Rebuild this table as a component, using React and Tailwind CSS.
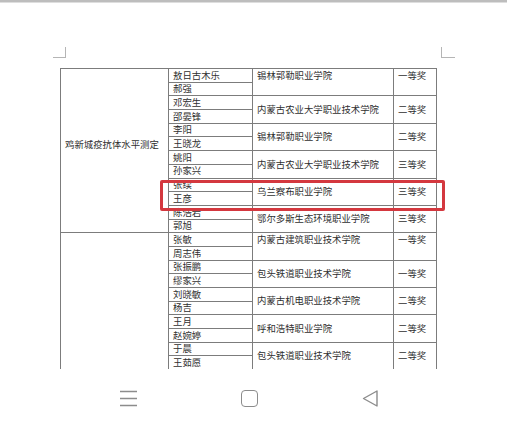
import React from "react";

const font = { fontFamily: '"Noto Sans CJK SC", "Noto Sans", sans-serif' };

// 名单数据：每组两名选手一行学校
const groups = [
  {
    title: "鸡新城疫抗体水平测定",
    span: "row-span-12",
    teams: [
      { names: ["敖日古木乐", "郝强"], school: "锡林郭勒职业学院", award: "一等奖", top: true },
      { names: ["邓宏生", "邵晏锋"], school: "内蒙古农业大学职业技术学院", award: "二等奖" },
      { names: ["李阳", "王晓龙"], school: "锡林郭勒职业学院", award: "二等奖" },
      { names: ["姚阳", "孙家兴"], school: "内蒙古农业大学职业技术学院", award: "三等奖" },
      { names: ["张续", "王彦"], school: "乌兰察布职业学院", award: "三等奖" },
      { names: ["陈浩岩", "郭旭"], school: "鄂尔多斯生态环境职业学院", award: "三等奖" },
    ],
  },
  {
    title: "",
    span: "row-span-10",
    teams: [
      { names: ["张敏", "周志伟"], school: "内蒙古建筑职业技术学院", award: "一等奖", top: true },
      { names: ["张振鹏", "缪家兴"], school: "包头铁道职业技术学院", award: "一等奖" },
      { names: ["刘晓敏", "杨吉"], school: "内蒙古机电职业技术学院", award: "二等奖" },
      { names: ["王月", "赵婉婷"], school: "呼和浩特职业学院", award: "二等奖" },
      { names: ["于晨", "王茹愿"], school: "包头铁道职业技术学院", award: "二等奖" },
    ],
  },
];

function SpanCell({ text, top, col }) {
  return (
    <div className={`${col} row-span-2 bg-white flex flex-col ${top ? "" : "justify-center"} pl-[4px]`}>
      <div className="h-[12.7px] flex items-center">{text}</div>
    </div>
  );
}

export default function App() {
  return (
    <div className="relative w-[507px] h-[425px] bg-white flex flex-col text-[#2f2f2f]" style={font}>
      {/* 顶部阴影线 */}
      <div className="h-[2px] bg-[#bdbdbd]" />
      <div className="h-px bg-[#dedede]" />

      {/* 页边角标记 */}
      <div className="mt-[44px] flex justify-between pl-[53px] pr-[52px]">
        <div className="w-[13px] h-[11px] border-r border-b border-[#b5b5b5]" />
        <div className="w-[14px] h-[11px] border-l border-b border-[#b5b5b5]" />
      </div>

      {/* 表格 */}
      <div className="ml-[60px] mt-[10px] w-[377px] h-[301px] overflow-hidden">
        <div className="grid grid-cols-[107px_83px_140px_42px] grid-rows-[repeat(22,12.7px)] gap-px p-px bg-[#7c7c7c] text-[9.4px] leading-none">
          {groups.map((g) => (
            <React.Fragment key={g.span}>
              <div className={`col-start-1 ${g.span} bg-white flex items-center pl-[4px] pb-[11px]`}>{g.title}</div>
              {g.teams.map((t) => (
                <React.Fragment key={t.names[0]}>
                  <div className="col-start-2 bg-white flex items-center pl-[4px]">{t.names[0]}</div>
                  <SpanCell col="col-start-3" text={t.school} top={t.top} />
                  <SpanCell col="col-start-4" text={t.award} top={t.top} />
                  <div className="col-start-2 bg-white flex items-center pl-[4px]">{t.names[1]}</div>
                </React.Fragment>
              ))}
            </React.Fragment>
          ))}
        </div>
      </div>

      {/* 红色标注框 */}
      <div className="absolute left-[160px] top-[180px] w-[285px] h-[31px] border-[3px] border-[#d4383f] rounded-[2px]" />

      {/* 底部导航 */}
      <div className="mt-[21px] flex items-center pl-[120px] gap-[104px]">
        <svg width="17" height="17" viewBox="0 0 17 17" fill="none" stroke="#8c8c8c" strokeWidth="1.4">
          <path d="M0 1.5h17M0 8.5h17M0 15.5h17" />
        </svg>
        <div className="w-[17px] h-[17px] border-[1.5px] border-[#8c8c8c] rounded-[4px]" />
        <svg width="16" height="17" viewBox="0 0 16 17" fill="none" stroke="#8c8c8c" strokeWidth="1.4" strokeLinejoin="round">
          <path d="M15 1L1.5 8.5L15 16Z" />
        </svg>
      </div>
    </div>
  );
}
